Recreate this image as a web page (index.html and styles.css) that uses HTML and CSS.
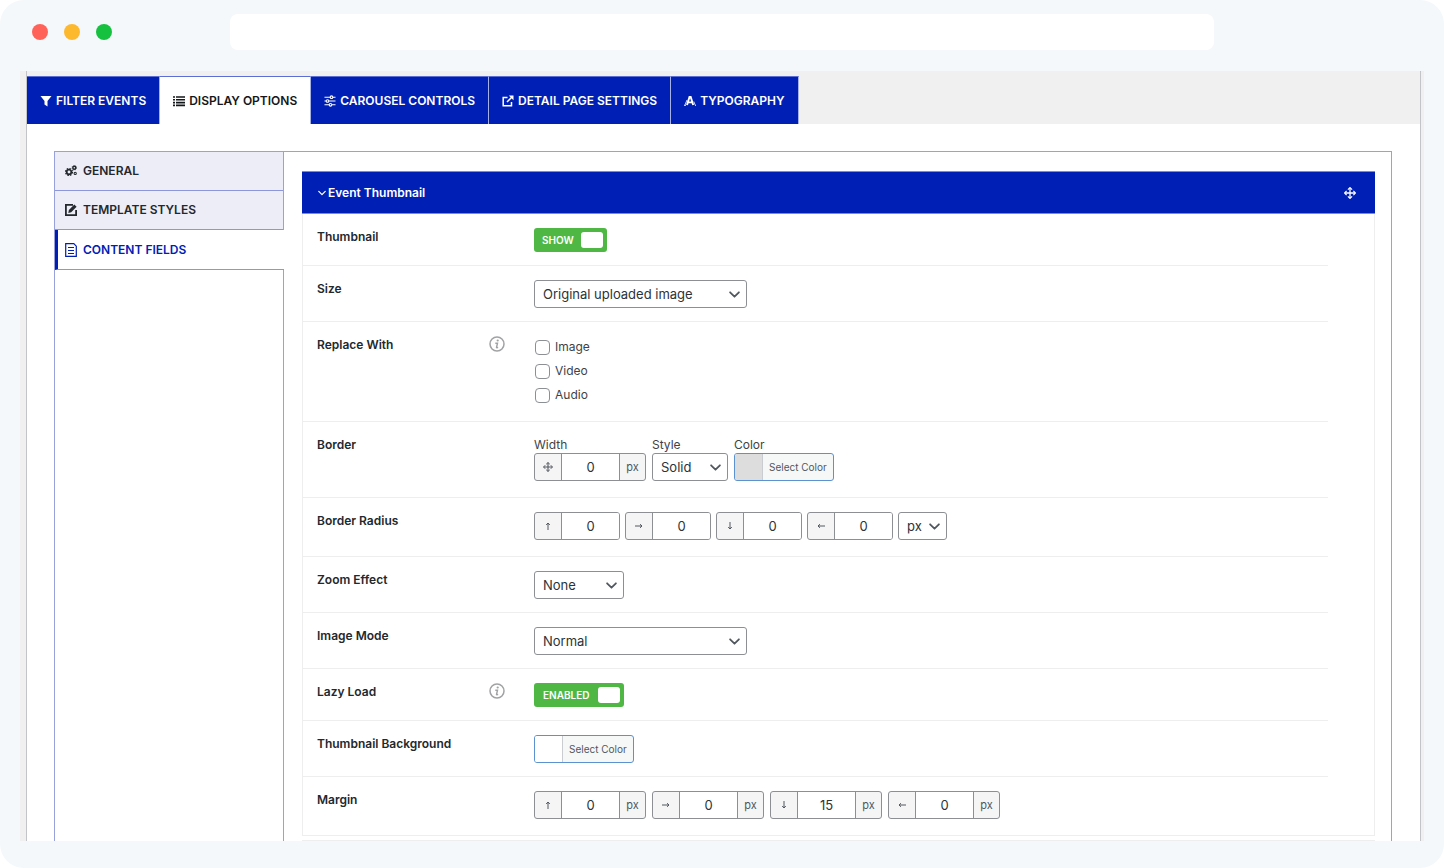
FILE: index.html
```html
<!DOCTYPE html>
<html lang="en">
<head>
<meta charset="utf-8">
<title>Display Options</title>
<link rel="stylesheet" href="styles.css">
</head>
<body>
<svg class="defs" aria-hidden="true">
  <symbol id="chevron" viewBox="0 0 10 6"><path d="M1 1l4 4 4-4" fill="none" stroke="currentColor" stroke-width="1.6" stroke-linecap="round" stroke-linejoin="round"/></symbol>
  <symbol id="move" viewBox="0 0 12 12"><path d="M6 1v10M1 6h10" stroke="currentColor" stroke-width="1.3"/><path d="M3.900 2.600L6 .6l2.100 2M3.900 9.400l2.100 2 2.100-2M2.600 3.900L.6 6l2 2.100M9.400 3.900l2 2.100-2 2.100" fill="none" stroke="currentColor" stroke-width="1.200"/></symbol>
  <symbol id="info" viewBox="0 0 16 16"><circle cx="8" cy="8" r="7" fill="none" stroke="currentColor" stroke-width="1.5"/><circle cx="8.700" cy="4.500" r="1.100" fill="currentColor"/><path d="M6.300 7.200h2.200l-1 4.300q.2.500 1.600-.2" fill="none" stroke="currentColor" stroke-width="1.400"/></symbol>
  <symbol id="arrow" viewBox="0 0 8 8"><path d="M4 8V1M2.200 3L4 1l1.800 2" fill="none" stroke="currentColor" stroke-width="1"/></symbol>
</svg>
<div class="window">
  <header class="titlebar">
    <div class="lights"><i class="light red"></i><i class="light amber"></i><i class="light green"></i></div>
    <div class="address"></div>
  </header>
  <main class="viewport">
    <div class="metabox">
      <nav class="tabs">
        <button class="tab"><svg class="ico" viewBox="0 0 12 12"><path d="M.5 1h11L7.500 6v5.500l-3-2V6z" fill="currentColor"/></svg>FILTER EVENTS</button>
        <button class="tab active"><svg class="ico" viewBox="0 0 12 12"><path d="M0 1.200h2v1.600H0zM3 1.200h9v1.600H3zM0 4h2v1.600H0zM3 4h9v1.600H3zM0 6.800h2v1.600H0zM3 6.800h9v1.600H3zM0 9.600h2v1.600H0zM3 9.600h9v1.600H3z" fill="currentColor"/></svg>DISPLAY OPTIONS</button>
        <button class="tab"><svg class="ico" viewBox="0 0 12 12"><g fill="none" stroke="currentColor" stroke-width="1.100"><path d="M.5 2.200h5.500M9 2.200h2.500M.5 6h1.500M5 6h6.500M.5 9.800H5M8 9.800h3.500"/><circle cx="7.500" cy="2.200" r="1.300"/><circle cx="3.500" cy="6" r="1.300"/><circle cx="6.500" cy="9.800" r="1.300"/></g></svg>CAROUSEL CONTROLS</button>
        <button class="tab"><svg class="ico" viewBox="0 0 12 12"><path d="M5.500 2.500H1.200v8.300h8.300V7M5 7l5-5" fill="none" stroke="currentColor" stroke-width="1.500"/><path d="M6.800.5h4.700v4.700z" fill="currentColor"/></svg>DETAIL PAGE SETTINGS</button>
        <button class="tab"><svg class="ico" viewBox="0 0 12 12"><path d="M3 10L5.500 2h1.200L9.200 10M4.200 7.400h3.800" fill="none" stroke="currentColor" stroke-width="1.900"/><path d="M3 5L.8 10.300M0 10.400h2M11 10.400h1M9.800 6.500l1.500 3.800" fill="none" stroke="currentColor" stroke-width=".8"/></svg>TYPOGRAPHY</button>
      </nav>
      <div class="settings">
        <nav class="side">
          <button class="side-item"><svg class="ico" viewBox="0 0 12 12"><g fill="none" stroke="currentColor"><circle cx="4" cy="7" r="2.300" stroke-width="1.700"/><circle cx="4" cy="7" r="3.500" stroke-width="1.200" stroke-dasharray="1.500 1.250"/><circle cx="9.300" cy="2.700" r="1.500" stroke-width="1.400"/><circle cx="9.300" cy="2.700" r="2.300" stroke-width=".7" stroke-dasharray="1 .8"/><circle cx="10.200" cy="8.400" r="1.100" stroke-width="1.100"/></g></svg>GENERAL</button>
          <button class="side-item"><svg class="ico" viewBox="0 0 12 12"><path d="M8 .9H.9v10.200h10.200V6" fill="none" stroke="currentColor" stroke-width="1.800"/><path d="M3.300 8.900l.6-3L9.300.5l2.300 2.300L6.200 8.200z" fill="currentColor"/></svg>TEMPLATE STYLES</button>
          <button class="side-item current"><svg class="ico" viewBox="0 0 12 14"><path d="M.7.7h8.100l2.500 2.500v10.100H.7z" fill="none" stroke="currentColor" stroke-width="1.200"/><path d="M3 4.500h6M3 7.500h6M3 10.500h6" stroke="currentColor" stroke-width="1"/></svg>CONTENT FIELDS</button>
        </nav>
        <div class="content">
          <section class="panel">
            <button class="panel-head"><svg class="head-chevron"><use href="#chevron"/></svg><span>Event Thumbnail</span><svg class="move"><use href="#move"/></svg></button>
            <div class="row"><div class="name"><label for="thumb">Thumbnail</label></div>
              <div class="field"><label class="toggle">SHOW<input type="checkbox" id="thumb" checked></label></div></div>
            <div class="row"><div class="name"><label for="size">Size</label></div>
              <div class="field"><span class="select wide"><select id="size"><option>Original uploaded image</option></select><svg><use href="#chevron"/></svg></span></div></div>
            <div class="row"><div class="name">Replace With<svg class="info"><use href="#info"/></svg></div>
              <div class="field checks">
                <label><input type="checkbox">Image</label>
                <label><input type="checkbox">Video</label>
                <label><input type="checkbox">Audio</label></div></div>
            <div class="row"><div class="name">Border</div>
              <div class="field group">
                <div><label class="caption" for="bw">Width</label><span class="num"><i><svg class="cross"><use href="#move"/></svg></i><input id="bw" value="0"><b>px</b></span></div>
                <div><label class="caption" for="bs">Style</label><span class="select style"><select id="bs"><option>Solid</option></select><svg><use href="#chevron"/></svg></span></div>
                <div><label class="caption" for="bc">Color</label><button class="color" id="bc"><i class="swatch grey"></i><span>Select Color</span></button></div></div></div>
            <div class="row"><div class="name">Border Radius</div>
              <div class="field group tight">
                <span class="num"><i><svg class="arrow"><use href="#arrow"/></svg></i><input aria-label="Radius top" value="0"></span>
                <span class="num"><i><svg class="arrow right"><use href="#arrow"/></svg></i><input aria-label="Radius right" value="0"></span>
                <span class="num"><i><svg class="arrow down"><use href="#arrow"/></svg></i><input aria-label="Radius bottom" value="0"></span>
                <span class="num"><i><svg class="arrow left"><use href="#arrow"/></svg></i><input aria-label="Radius left" value="0"></span>
                <span class="select unit"><select aria-label="Radius unit"><option>px</option></select><svg><use href="#chevron"/></svg></span></div></div>
            <div class="row"><div class="name"><label for="zoom">Zoom Effect</label></div>
              <div class="field"><span class="select zoom"><select id="zoom"><option>None</option></select><svg><use href="#chevron"/></svg></span></div></div>
            <div class="row"><div class="name"><label for="mode">Image Mode</label></div>
              <div class="field"><span class="select wide"><select id="mode"><option>Normal</option></select><svg><use href="#chevron"/></svg></span></div></div>
            <div class="row"><div class="name"><label for="lazy">Lazy Load</label><svg class="info"><use href="#info"/></svg></div>
              <div class="field"><label class="toggle long">ENABLED<input type="checkbox" id="lazy" checked></label></div></div>
            <div class="row"><div class="name"><label for="bg">Thumbnail Background</label></div>
              <div class="field"><button class="color" id="bg"><i class="swatch"></i><span>Select Color</span></button></div></div>
            <div class="row"><div class="name">Margin</div>
              <div class="field group">
                <span class="num"><i><svg class="arrow"><use href="#arrow"/></svg></i><input aria-label="Margin top" value="0"><b>px</b></span>
                <span class="num"><i><svg class="arrow right"><use href="#arrow"/></svg></i><input aria-label="Margin right" value="0"><b>px</b></span>
                <span class="num"><i><svg class="arrow down"><use href="#arrow"/></svg></i><input aria-label="Margin bottom" value="15"><b>px</b></span>
                <span class="num"><i><svg class="arrow left"><use href="#arrow"/></svg></i><input aria-label="Margin left" value="0"><b>px</b></span></div></div>
          </section>
          <div class="next-panel"></div>
        </div>
      </div>
    </div>
  </main>
</div>
</body>
</html>
```
FILE: styles.css
```css
* { box-sizing: border-box; }
body { margin: 0; background: #fff; color: #3c434a; font: 12px/18px Inter, "Liberation Sans", sans-serif; }
button, input, select { font: inherit; color: inherit; margin: 0; }
button { border: 0; padding: 0; background: none; text-align: left; cursor: pointer; }
svg { display: block; flex: none; }
.defs { position: absolute; width: 0; height: 0; }

.window { min-height: 100vh; padding: 0 20px 27px; border-radius: 24px; background: #f4f8fb; display: flex; flex-direction: column; }
.titlebar { display: flex; padding: 14px 210px 21px 12px; }
.lights { display: flex; align-items: center; gap: 16px; width: 198px; flex: none; }
.light { width: 16px; height: 16px; border-radius: 50%; }
.red { background: #ff6259; }
.amber { background: #fdb92e; }
.green { background: #17c140; }
.address { flex: 1; height: 36px; border-radius: 8px; background: #fff; }

.viewport { flex: 1; display: flex; background: #f0f0f0; padding: 0 3px 0 6px; }
.metabox { flex: 1; display: flex; flex-direction: column; background: #fff; border: solid #c3c4c7; border-width: 0 1px; }

.tabs { display: flex; background: #f0f0f0; padding-top: 5px; }
.tab { display: flex; align-items: center; gap: 4px; height: 48px; padding: 0 13px; background: #0020b5; color: #fff; font-weight: 600; border-top: 1px solid #5c6dd6; border-right: 1px solid #a6b0e4; white-space: nowrap; }
.tab.active { background: #fff; color: #14171a; }
.ico { width: 12px; height: 12px; }

.settings { flex: 1; display: flex; margin: 27px 28px 0 27px; border: 1px solid #98a1dc; border-bottom: 0; }
.side { width: 229px; flex: none; border-right: 1px solid #98a1dc; }
.side-item { display: flex; align-items: center; gap: 6px; width: 100%; height: 39px; padding-left: 10px; background: #ededf7; color: #23282d; font-weight: 600; border-bottom: 1px solid #8c97da; }
.side-item.current { width: calc(100% + 1px); height: 40px; padding-left: 7px; background: #fff; color: #0020b5; border-left: 3px solid #0020b5; }
.current .ico { height: 14px; }

.content { flex: 1; padding: 19px 16px 0 18px; }
.panel { border: solid #eee; border-width: 0 1px 1px; }
.panel-head { display: flex; align-items: center; gap: 2px; width: calc(100% + 2px); margin: 0 -1px; height: 43px; padding: 0 19px 0 16px; background: #0020b5; color: #fff; font-weight: 600; border: solid #7c88d8; border-width: 1px 0; }
.head-chevron { width: 8px; height: 6px; }
.move { width: 12px; height: 12px; margin-left: auto; }

.row { display: grid; grid-template-columns: 217px 1fr; margin-right: 46px; padding: 14px 0 13px 14px; border-bottom: 1px solid #eee; }
.row:last-child { border-bottom: 0; }
.name { display: flex; justify-content: space-between; align-self: start; padding-right: 29px; font-weight: 600; color: #23282d; }
.info { width: 16px; height: 16px; color: #a0a2a4; }
.field { display: flex; }
.group { gap: 6px; align-items: flex-end; margin-bottom: 3px; }
.tight { gap: 5px; }
.caption { display: block; line-height: 17px; }

.toggle { display: flex; align-items: center; gap: 7px; height: 24px; padding: 0 4px 0 8px; border-radius: 3px; background: #4fb845; color: #fff; font-size: 10px; font-weight: 600; }
.toggle.long { gap: 9px; padding-left: 9px; }
.toggle input { appearance: none; width: 22px; height: 16px; border-radius: 3px; background: #fff; }

.select { position: relative; display: block; height: 28px; }
.select select { appearance: none; width: 100%; height: 28px; padding: 0 24px 0 8px; border: 1px solid #8c8f94; border-radius: 3px; background: #fff; color: #2c3338; font-size: 13px; }
.select svg { position: absolute; right: 7px; top: 11px; width: 11px; height: 7px; color: #50575e; pointer-events: none; }
.wide { width: 213px; }
.style { width: 76px; }
.unit { width: 49px; }
.zoom { width: 90px; }

.checks { flex-direction: column; align-items: flex-start; gap: 2px; margin-bottom: 2px; }
.checks label { display: flex; align-items: center; gap: 5px; height: 22px; padding-left: 1px; }
.checks input { appearance: none; width: 15px; height: 15px; border: 1px solid #8c8f94; border-radius: 4px; background: #fff; }

.num { display: flex; height: 28px; border: 1px solid #8c8f94; border-radius: 3px; background: #f5f5f5; overflow: hidden; }
.num i, .num b { display: flex; align-items: center; justify-content: center; width: 26px; font-style: normal; font-weight: 400; font-size: 11px; color: #50575e; }
.num input { width: 58px; padding: 0; border: 0; border-left: 1px solid #8c8f94; background: #fff; text-align: center; font-size: 13px; color: #2c3338; }
.num b { border-left: 1px solid #8c8f94; }
.cross { width: 10px; height: 10px; }
.arrow { width: 8px; height: 8px; }
.right { transform: rotate(90deg); }
.down { transform: rotate(180deg); }
.left { transform: rotate(270deg); }

.color { display: flex; height: 28px; border: 1px solid #5b92cf; border-radius: 3px; background: #f6f7f7; color: #50575e; font-size: 10px; line-height: 26px; overflow: hidden; }
.swatch { width: 28px; border-right: 1px solid #c9ccd0; background: #fff; }
.swatch.grey { background: #ddd; }
.color span { padding: 0 6px; }

.next-panel { height: 5px; margin-top: 4px; border-top: 1px solid #eee; margin-bottom: -4px; }
```
